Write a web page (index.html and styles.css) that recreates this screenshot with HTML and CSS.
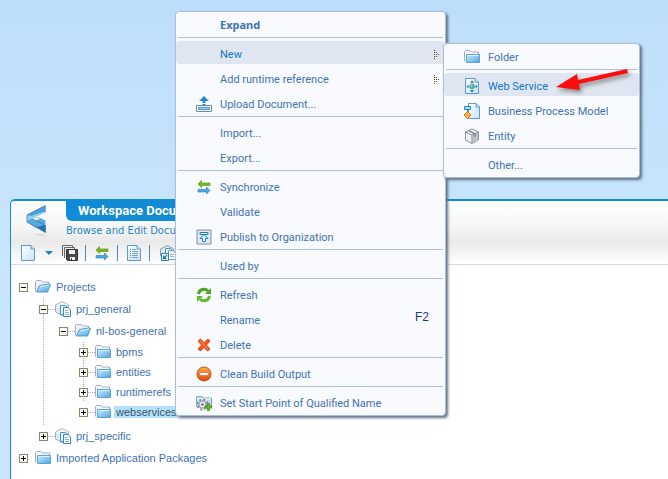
FILE: index.html
```html
<!DOCTYPE html>
<html lang="en">
<head>
<meta charset="utf-8">
<title>Workspace Documents</title>
<link rel="stylesheet" href="styles.css">
</head>
<body>
<svg class="defs" aria-hidden="true">
  <defs>
    <linearGradient id="g-folder" x1="0" y1="0" x2="1" y2="1"><stop offset="0" stop-color="#d3edfc"/><stop offset="1" stop-color="#4ba5e0"/></linearGradient>
    <linearGradient id="g-page" x1="0" y1="0" x2="1" y2="1"><stop offset="0" stop-color="#fff"/><stop offset="1" stop-color="#c3e4fa"/></linearGradient>
    <linearGradient id="g-orange" x1="0" y1="0" x2="0" y2="1"><stop offset="0" stop-color="#fdb04a"/><stop offset="1" stop-color="#e2450c"/></linearGradient>
    <linearGradient id="g-logo" x1="0" y1="0" x2="1" y2="0"><stop offset="0" stop-color="#6cbcec"/><stop offset="1" stop-color="#2f7dbd"/></linearGradient>
  </defs>
  <symbol id="folder" viewBox="0 0 16 16">
    <path d="M.5 12.5V2.500l1-1H6L7.500 3h7v3" fill="#f4f7fa" stroke="#a3afbd"/>
    <path d="M2.500 5.500h13v8h-13z" fill="url(#g-folder)" stroke="#5ba3d6"/>
    <path d="M3.500 6.500h11" stroke="#d9f0fd"/>
  </symbol>
  <symbol id="folder-open" viewBox="0 0 16 16">
    <path d="M.5 12.500v-10l1-1H6L7.500 3h6v4" fill="#eef2f6" stroke="#a3afbd"/>
    <path d="M4.500 6.500 14 5l1.500.5-3 7.500H1.500z" fill="url(#g-folder)" stroke="#4a98d0"/>
    <path d="M5 7.500 14 6" stroke="#d9f0fd"/>
  </symbol>
  <symbol id="package" viewBox="0 0 16 16">
    <path d="M.5 4 7 .7l6.500 3V11L7 14.500.5 11z" fill="#e1e7ee" stroke="#a3b0bf"/>
    <path d="M1 4.200 7 7l6-3.200L7 1.200z" fill="#f5f8fa"/>
    <path d="M5.500 4.500h5l2 2v7h-7z" fill="#f2f9fe" stroke="#3e93cd"/>
    <path d="M8.500 6.500H13l2.500 2.500v6.500h-7z" fill="#fff" stroke="#2f89c6"/>
    <path d="M10 9.500h3M10 11.500h4M10 13.500h4" stroke="#7dbbe3"/>
  </symbol>
  <symbol id="package-link" viewBox="0 0 16 16">
    <path d="M.5 4 7 .7l6.500 3V11L7 14.500.5 11z" fill="#e1e7ee" stroke="#8fa0b2"/>
    <path d="M5.500 3.500h5l2 2v8h-7z" fill="#f2f9fe" stroke="#3e93cd"/>
    <path d="M8.500 5.500H13L15.500 8v6.500h-7z" fill="#fff" stroke="#6d9cbd"/>
    <path d="M10 9.500h4M10 11.500h4" stroke="#7dbbe3"/>
    <path d="M1.500 8.500h7v7h-7z" fill="#fff" stroke="#2785c4"/>
    <path d="M7 10 3.500 13.500M3.500 10.500v3h3" fill="none" stroke="#1675b8" stroke-width="1.300"/>
  </symbol>
  <symbol id="page" viewBox="0 0 16 16">
    <path d="M1.500.5H11L14.500 4v11.500h-13z" fill="url(#g-page)" stroke="#5b9bcd"/>
    <path d="M11 .5V4h3.500" fill="#d5ecfb" stroke="#5b9bcd"/>
  </symbol>
  <symbol id="list" viewBox="0 0 16 16">
    <use href="#page"/>
    <path d="M6 4.500h4M6 6.500h6M6 8.500h6M6 10.500h6M6 12.500h6" stroke="#86a2b9"/>
    <path d="M4 4.500h1M4 6.500h1M4 8.500h1M4 10.500h1M4 12.500h1" stroke="#288ed0"/>
  </symbol>
  <symbol id="disks" viewBox="0 0 16 16">
    <path d="M.5 11V.5h10V3M2.500 13V2.500h10V5" fill="#eee" stroke="#666"/>
    <path d="M4.500 4.500h11v11h-10l-1-1z" fill="#4a4a4a" stroke="#333"/>
    <path d="M7 5h6v4H7zM8 12h5v3H8z" fill="#f1f1f1"/><path d="M9 13h1v2H9z" fill="#333"/>
  </symbol>
  <symbol id="sync" viewBox="0 0 16 16">
    <path d="M2 5 5.500 1.500V4H14v2.500H5.500v2z" fill="#78bb16" stroke="#4c8e0b" stroke-width=".6"/>
    <path d="M14 11.500 10.500 8v2.500H2V13h8.500v2z" fill="#4eabe4" stroke="#2776b3" stroke-width=".6"/>
  </symbol>
  <symbol id="upload" viewBox="0 0 16 16">
    <path d="M.5 9.500h15v6H.5z" fill="#eef3f7" stroke="#768797"/>
    <path d="M2.500 11.500h11v2h-11z" fill="#a6d3ef" stroke="#4a99cf"/>
    <path d="M8 0l5 5H9.500v2h-3V5H3z" fill="#278ac8"/><path d="M6.500 8.500h3" stroke="#278ac8"/>
  </symbol>
  <symbol id="publish" viewBox="0 0 16 16">
    <path d="M1 1h14v14H1z" fill="#e3eaf1" stroke="#7f8c9b"/>
    <path d="M4 3.500h8v2H4zM8 5.500l4 4H9.500v3h-3v-3H4z" fill="#d8effc" stroke="#247cb8"/>
  </symbol>
  <symbol id="refresh" viewBox="0 0 16 16">
    <path d="M2.500 7a5.500 5.500 0 0 1 9.500-3" fill="none" stroke="#4ba51f" stroke-width="3"/><path d="M15 1v6H9z" fill="#4ba51f"/>
    <path d="M13.500 9a5.500 5.500 0 0 1-9.500 3" fill="none" stroke="#65ba35" stroke-width="3"/><path d="M1 15V9h6z" fill="#65ba35"/>
  </symbol>
  <symbol id="delete" viewBox="0 0 16 16">
    <path d="M2 4 4.500 2 8 5.500 12 2l2 2-3.500 4 3.500 4-2.500 2L8 10.500 4.500 14 2 12l3.500-4z" fill="#f05a25" stroke="#c83708" stroke-width=".8"/>
    <path d="M4 3.500 12 12" stroke="#fa9164"/>
  </symbol>
  <symbol id="clean" viewBox="0 0 16 16">
    <circle cx="8" cy="8" r="7" fill="url(#g-orange)" stroke="#cc4a10"/>
    <rect x="3.500" y="6.500" width="9" height="3" rx=".5" fill="#fff" stroke="#d8591b" stroke-width=".6"/>
  </symbol>
  <symbol id="start" viewBox="0 0 16 16">
    <path d="M.5 12V1.500H6L7 3h8.500v8H8" fill="#b9def6" stroke="#8aa5be"/><path d="M1 4h14" stroke="#fff"/>
    <circle cx="6.500" cy="9.500" r="5" fill="none" stroke="#8c949c" stroke-width="2" stroke-dasharray="2 1.930"/>
    <circle cx="6.500" cy="9.500" r="3.600" fill="#e9ecef" stroke="#9aa2a9" stroke-width="1.400"/><circle cx="6.500" cy="9.500" r="1.300" fill="#6a737b"/>
    <path d="M11.500 8.500h2V11H16v2h-2.500v2.500h-2V13H9v-2h2.500z" fill="#62c021" stroke="#328509" stroke-width=".7"/>
  </symbol>
  <symbol id="webservice" viewBox="0 0 16 16">
    <use href="#page"/>
    <circle cx="8" cy="8.500" r="2.700" fill="#45a89c"/><circle cx="7.500" cy="8" r="1.200" fill="#a4dca2"/>
    <path d="M8 2.500 10 5H6zM8 14.500 6 12h4zM2.500 8.500l2-2v4zM13.500 8.500l-2-2v4z" fill="#2179b8"/>
  </symbol>
  <symbol id="process" viewBox="0 0 16 16">
    <path d="M4.500.5H12L15.500 4v11.500h-11z" fill="url(#g-page)" stroke="#5b9bcd"/><path d="M12 .5V4h3.500" fill="none" stroke="#5b9bcd"/>
    <path d="M.5 3.500h6v3h-6z" fill="#a5daf8" stroke="#2985c4"/><path d="M3.500 7v2" stroke="#457ca7"/>
    <path d="M3.500 8.500 7 12l-3.500 3.500L0 12z" fill="#fdb14a" stroke="#df7310"/>
  </symbol>
  <symbol id="entity" viewBox="0 0 16 16">
    <path d="M1.500 4 8 .8 14.500 4v8L8 15.500 1.500 12z" fill="#eef0f4" stroke="#8e95a5"/>
    <path d="M8.500 7.500 14 5v7l-5.500 3z" fill="#bdc2cd"/>
    <path d="M1.500 4 8 7.200 14.500 4M8 7.200v8.300" fill="none" stroke="#838b9c"/>
    <path d="M4.500 2.500 11 5.800V9" fill="none" stroke="#727a8d" stroke-width="1.300"/>
  </symbol>
  <symbol id="dots" viewBox="0 0 5 9">
    <path d="M0 0h1v1H0zM0 2h1v1H0zM0 4h1v1H0zM0 6h1v1H0zM0 8h1v1H0zM2 2h1v1H2zM2 4h1v1H2zM2 6h1v1H2zM4 4h1v1H4z" fill="#59490f"/>
  </symbol>
</svg>

<main class="window">
  <header class="header">
    <svg class="logo" viewBox="0 0 24 32" aria-hidden="true">
      <path d="M6 29h14l-4 2z" fill="#bdc5cd" opacity=".5"/>
      <path d="M1 10v7l18.500 10.500v-7z" fill="#3b8fd0"/>
      <path d="M19.500.5 1 10v6L19.500 7z" fill="url(#g-logo)"/>
      <path d="M1 16.500 19.500 7v-.5L1 10z" fill="#8fd0f5"/>
      <path d="M19.500.5 1 10l4 1 14.500-5z" fill="#4c9fd9"/>
      <path d="M1 17 12 12l7.500 3.500v4L10 23z" fill="#58a9df"/>
      <path d="M19.500 20v7.500L10 22z" fill="#2b70ae"/>
      <path d="M7 13.500l3.500-1.500 3.500 1.500-3.500 2z" fill="#f6f9fb"/>
      <path d="M19.500.5 1 10v7l18.500 10.500v-7L10 15.500" fill="none" stroke="#2e78b6" stroke-width=".7"/>
    </svg>
    <div class="heading">
      <h1>Workspace Documents</h1>
      <p>Browse and Edit Documents</p>
    </div>
    <div class="toolbar" role="toolbar" aria-label="Documents">
      <button aria-label="New document"><svg class="icon"><use href="#page"/></svg></button>
      <button class="caret" aria-label="More document types"></button>
      <button aria-label="Save all"><svg class="icon"><use href="#disks"/></svg></button>
      <span class="divider"></span>
      <button aria-label="Synchronize"><svg class="icon"><use href="#sync"/></svg></button>
      <span class="divider"></span>
      <button aria-label="Properties"><svg class="icon"><use href="#list"/></svg></button>
      <span class="divider"></span>
      <button class="last" aria-label="Packages"><svg class="icon"><use href="#package-link"/></svg></button>
    </div>
  </header>

  <ul class="tree">
    <li><div class="row"><button class="toggle open" aria-label="Collapse"></button><svg class="icon"><use href="#folder-open"/></svg><span>Projects</span></div>
      <ul class="branch">
        <li class="joined"><div class="row"><button class="toggle open" aria-label="Collapse"></button><svg class="icon"><use href="#package"/></svg><span>prj_general</span></div>
          <ul class="branch">
            <li><div class="row"><button class="toggle open" aria-label="Collapse"></button><svg class="icon"><use href="#folder-open"/></svg><span>nl-bos-general</span></div>
              <ul class="branch leaves">
                <li class="joined"><div class="row"><button class="toggle" aria-label="Expand"></button><svg class="icon"><use href="#folder"/></svg><span>bpms</span></div></li>
                <li class="joined"><div class="row"><button class="toggle" aria-label="Expand"></button><svg class="icon"><use href="#folder"/></svg><span>entities</span></div></li>
                <li class="joined"><div class="row"><button class="toggle" aria-label="Expand"></button><svg class="icon"><use href="#folder"/></svg><span>runtimerefs</span></div></li>
                <li><div class="row"><button class="toggle" aria-label="Expand"></button><svg class="icon"><use href="#folder"/></svg><span class="selected">webservices</span></div></li>
              </ul>
            </li>
          </ul>
        </li>
        <li><div class="row"><button class="toggle" aria-label="Expand"></button><svg class="icon"><use href="#package"/></svg><span>prj_specific</span></div></li>
      </ul>
    </li>
    <li><div class="row"><button class="toggle" aria-label="Expand"></button><svg class="icon"><use href="#folder"/></svg><span>Imported Application Packages</span></div></li>
  </ul>
</main>

<div class="menu context" role="menu">
  <button class="item strong" role="menuitem">Expand</button>
  <hr>
  <button class="item active" role="menuitem">New<svg class="more"><use href="#dots"/></svg></button>
  <button class="item" role="menuitem">Add runtime reference<svg class="more"><use href="#dots"/></svg></button>
  <button class="item" role="menuitem"><svg class="icon"><use href="#upload"/></svg>Upload Document...</button>
  <hr>
  <button class="item" role="menuitem">Import...</button>
  <button class="item" role="menuitem">Export...</button>
  <hr>
  <button class="item" role="menuitem"><svg class="icon"><use href="#sync"/></svg>Synchronize</button>
  <button class="item" role="menuitem">Validate</button>
  <button class="item" role="menuitem"><svg class="icon"><use href="#publish"/></svg>Publish to Organization</button>
  <hr>
  <button class="item" role="menuitem">Used by</button>
  <hr>
  <button class="item" role="menuitem"><svg class="icon"><use href="#refresh"/></svg>Refresh</button>
  <button class="item" role="menuitem">Rename<kbd>F2</kbd></button>
  <button class="item" role="menuitem"><svg class="icon"><use href="#delete"/></svg>Delete</button>
  <hr>
  <button class="item" role="menuitem"><svg class="icon"><use href="#clean"/></svg>Clean Build Output</button>
  <hr>
  <button class="item" role="menuitem"><svg class="icon"><use href="#start"/></svg>Set Start Point of Qualified Name</button>
</div>

<div class="menu submenu" role="menu">
  <button class="item" role="menuitem"><svg class="icon"><use href="#folder"/></svg>Folder</button>
  <hr>
  <button class="item active" role="menuitem"><svg class="icon"><use href="#webservice"/></svg>Web Service</button>
  <button class="item" role="menuitem"><svg class="icon"><use href="#process"/></svg>Business Process Model</button>
  <button class="item" role="menuitem"><svg class="icon"><use href="#entity"/></svg>Entity</button>
  <hr>
  <button class="item" role="menuitem">Other...</button>
</div>

<svg class="pointer" viewBox="0 0 80 30" aria-hidden="true">
  <path d="M1 19 22 6l1 6L72 1l1 4L24 16l1 6z" fill="#fb0d0d"/>
</svg>
</body>
</html>
```

FILE: styles.css
```css
* { box-sizing: border-box; }
body {
  margin: 0;
  min-height: 100vh;
  padding: 199px 0 0 10px;
  display: flex;
  overflow: hidden;
  background: linear-gradient(#bddefb, #c8e4fd 220px, #cce6fe);
  color: #4272b0;
  font: 11px/16px "Liberation Sans", Arial, sans-serif;
}
button { border: 0; padding: 0; background: none; color: inherit; font: inherit; }
ul { list-style: none; margin: 0; padding: 0; }
.defs { position: absolute; width: 0; height: 0; }
.icon { width: 16px; height: 16px; flex: none; }

.window {
  flex: 1;
  border: solid #118bd3;
  border-width: 2px 0 0 1px;
  border-top-left-radius: 5px;
  background: #fff;
  overflow: hidden;
}
.header {
  display: grid;
  grid-template-columns: 55px 1fr;
  grid-template-rows: 40px 23px;
  background: linear-gradient(#fff, #f6f6f6 40%, #ebebeb 62%, #ebebeb 68%, #fff);
  border-bottom: 1px solid #cbd9e8;
}
.logo { width: 24px; height: 32px; margin: 4px 0 0 15px; }
.heading { width: 120px; overflow: hidden; white-space: nowrap; }
h1 {
  margin: 0;
  padding-left: 12px;
  background: #118bd3;
  border-bottom-left-radius: 6px;
  color: #fff;
  font: bold 13px/20px Roboto, sans-serif;
}
.heading p { margin: 0; color: #2b85c6; font: 10px/20px "DejaVu Sans", sans-serif; }
.toolbar { grid-column: 1 / -1; display: flex; align-items: center; padding-left: 9px; }
.toolbar button { display: flex; }
.toolbar .caret {
  margin: 0 9px;
  border: solid transparent;
  border-width: 4px 4px 0;
  border-top-color: #1981ca;
}
.divider { width: 1px; height: 16px; margin: 0 8px 0 7px; background: #4b87bc; }
.toolbar .last { margin-left: 2px; }

.tree { padding: 11px 0 0 8px; }
.branch { padding-left: 20px; }
.row { display: flex; align-items: center; height: 22px; }
.leaves { padding-bottom: 3px; }
.leaves .row { height: 20px; }
.row .icon { margin: 0 5px 0 7px; }
.row span { white-space: nowrap; }
.row .selected { background: #b5dffa; color: #35576c; box-shadow: -2px 0 #b5dffa; line-height: 12px; }
.toggle {
  width: 9px;
  height: 9px;
  flex: none;
  border: 1px solid #8d8468;
  background:
    linear-gradient(#000, #000) center / 5px 1px no-repeat,
    linear-gradient(#000, #000) center / 1px 5px no-repeat,
    #fff;
}
.toggle.open { background: linear-gradient(#000, #000) center / 5px 1px no-repeat, #fff; }
.branch .row { background: repeating-linear-gradient(90deg, #aaa 0 1px, transparent 1px 2px) 9px center / 7px 1px no-repeat; }
.branch .joined { background: repeating-linear-gradient(#aaa 0 1px, transparent 1px 2px) 4px 0 / 1px 100% no-repeat; }

.menu {
  position: absolute;
  border: 1px solid #a9bfdc;
  border-radius: 4px;
  background: #f8fafd;
  box-shadow: 2px 2px 3px #5d7184;
  font: 11px/16px Roboto, sans-serif;
}
.context { left: 175px; top: 11px; width: 271px; }
.submenu { left: 443px; top: 43px; width: 197px; }
.menu hr { margin: 0 2px 3px; border: 0; height: 1px; background: #adc1de; }
.item {
  display: flex;
  align-items: center;
  width: 100%;
  height: 23px;
  margin-bottom: 2px;
  padding: 4px 6px 0 44px;
  border-radius: 4px;
  text-align: left;
  white-space: nowrap;
}
.item .icon { margin: 0 8px 2px -24px; }
.item.active { background: #dfe6f1; color: #1277c8; }
.item.strong { padding-top: 2px; font-family: "Noto Sans", sans-serif; font-weight: bold; }
.more { width: 5px; height: 9px; margin-left: auto; }
kbd { margin: 0 10px 8px auto; color: #173d77; font: 12px/16px "Liberation Sans", sans-serif; }

.pointer {
  position: absolute;
  left: 555px;
  top: 68px;
  width: 80px;
  height: 30px;
  filter: drop-shadow(2px 3px 2px #8b8b8b);
}
```
